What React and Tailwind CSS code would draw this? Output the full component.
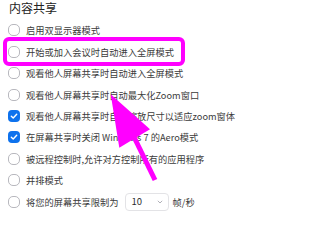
import React from "react";

const rows = [
  { text: "启用双显示器模式", checked: false },
  { text: "开始或加入会议时自动进入全屏模式", checked: false },
  { text: "观看他人屏幕共享时自动进入全屏模式", checked: false },
  { text: "观看他人屏幕共享时自动最大化Zoom窗口", checked: false },
  { text: "观看他人屏幕共享时自动缩放尺寸以适应zoom窗体", checked: true },
  { text: "在屏幕共享时关闭 Windows 7 的Aero模式", checked: true },
  { text: "被远程控制时,允许对方控制所有的应用程序", checked: false },
  { text: "并排模式", checked: false },
];

function Box({ checked }) {
  if (checked) {
    return (
      <span className="flex h-[12px] w-[12px] shrink-0 items-center justify-center rounded-[4px] bg-[#0e72ed]">
        <svg width="8" height="8" viewBox="0 0 8 8" fill="none">
          <path d="M1.3 4.2 L3.2 6 L6.7 2.2" stroke="white" strokeWidth="1.4" strokeLinecap="round" strokeLinejoin="round" />
        </svg>
      </span>
    );
  }
  return <span className="h-[12px] w-[12px] shrink-0 rounded-[5px] border border-[#b8b8be] bg-white" />;
}

export default function App() {
  return (
    <div
      className="relative h-[213px] w-[236px] overflow-hidden bg-white"
      style={{ fontFamily: '"Noto Sans CJK SC", "Noto Sans", sans-serif' }}
    >
      <div className="pl-[8px]">
        <div className="mt-[1px] mb-[4.8px] h-[14px] pl-[1px] text-[12px] leading-[14px] text-[#232323]">内容共享</div>
        {rows.map((r, i) => (
          <div key={i} className="flex h-[21.4px] items-center gap-[6px] whitespace-nowrap text-[9.25px] text-[#3b3b3b]">
            <Box checked={r.checked} />
            <span className="leading-[12px]">{r.text}</span>
          </div>
        ))}
        <div className="flex h-[21.4px] items-center whitespace-nowrap text-[9.25px] text-[#3b3b3b]">
          <Box checked={false} />
          <span className="ml-[6px] leading-[12px]">将您的屏幕共享限制为</span>
          <div className="ml-[6px] flex h-[18px] w-[44px] items-center justify-between rounded-[4px] border border-[#e3e3e6] pl-[6px] pr-[5px]">
            <span className="text-[9.5px] text-[#2b2b2b]">10</span>
            <svg width="6" height="4" viewBox="0 0 6 4" fill="none">
              <path d="M0.8 0.8 L3 3 L5.2 0.8" stroke="#a8a8b0" strokeWidth="0.9" />
            </svg>
          </div>
          <span className="ml-[4px] leading-[12px]">帧/秒</span>
        </div>
      </div>

      <div className="pointer-events-none absolute left-[3px] top-[37px] h-[29px] w-[182px] rounded-[6px] border-[4px] border-[#ff00ff]" />

      <svg className="pointer-events-none absolute left-0 top-0" width="236" height="213" viewBox="0 0 236 213">
        <line x1="134" y1="137" x2="155" y2="180" stroke="#ff00ff" strokeWidth="5" />
        <polygon points="110.7,94.3 150,129.3 119.3,147.7" fill="#ff00ff" />
      </svg>
    </div>
  );
}
